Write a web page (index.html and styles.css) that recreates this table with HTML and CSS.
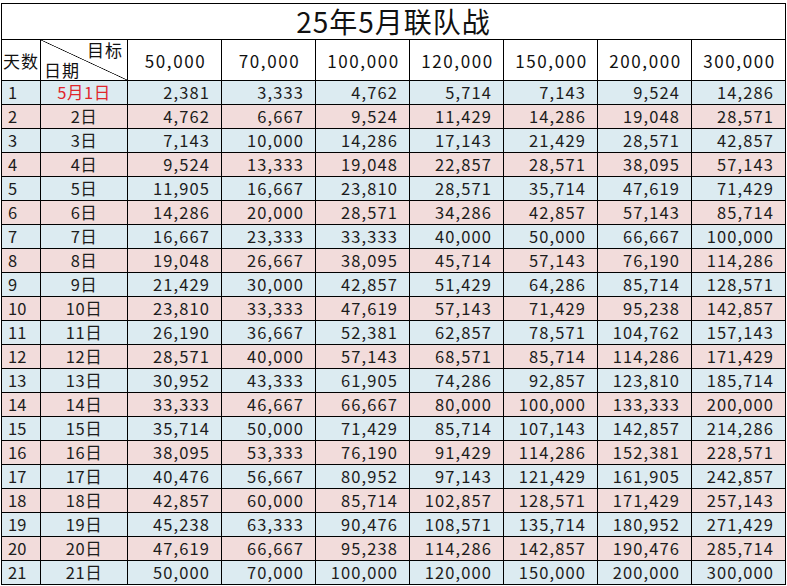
FILE: index.html
```html
<!DOCTYPE html>
<html lang="zh">
<head>
<meta charset="utf-8">
<link rel="stylesheet" href="styles.css">
</head>
<body>
<div class="sheet">
  <div class="title">25年5月联队战</div>
  <div class="hd days">天数</div>
  <div class="hd diag"><span class="tgt">目标</span><span class="dt">日期</span></div>
  <div class="hd num">50,000</div>
  <div class="hd num">70,000</div>
  <div class="hd num">100,000</div>
  <div class="hd num">120,000</div>
  <div class="hd num">150,000</div>
  <div class="hd num">200,000</div>
  <div class="hd num">300,000</div>

  <div class="row b"><div class="c0">1</div><div class="c1 red">5月1日</div><div>2,381</div><div>3,333</div><div>4,762</div><div>5,714</div><div>7,143</div><div>9,524</div><div>14,286</div></div>
  <div class="row p"><div class="c0">2</div><div class="c1">2日</div><div>4,762</div><div>6,667</div><div>9,524</div><div>11,429</div><div>14,286</div><div>19,048</div><div>28,571</div></div>
  <div class="row b"><div class="c0">3</div><div class="c1">3日</div><div>7,143</div><div>10,000</div><div>14,286</div><div>17,143</div><div>21,429</div><div>28,571</div><div>42,857</div></div>
  <div class="row p"><div class="c0">4</div><div class="c1">4日</div><div>9,524</div><div>13,333</div><div>19,048</div><div>22,857</div><div>28,571</div><div>38,095</div><div>57,143</div></div>
  <div class="row b"><div class="c0">5</div><div class="c1">5日</div><div>11,905</div><div>16,667</div><div>23,810</div><div>28,571</div><div>35,714</div><div>47,619</div><div>71,429</div></div>
  <div class="row p"><div class="c0">6</div><div class="c1">6日</div><div>14,286</div><div>20,000</div><div>28,571</div><div>34,286</div><div>42,857</div><div>57,143</div><div>85,714</div></div>
  <div class="row b"><div class="c0">7</div><div class="c1">7日</div><div>16,667</div><div>23,333</div><div>33,333</div><div>40,000</div><div>50,000</div><div>66,667</div><div>100,000</div></div>
  <div class="row p"><div class="c0">8</div><div class="c1">8日</div><div>19,048</div><div>26,667</div><div>38,095</div><div>45,714</div><div>57,143</div><div>76,190</div><div>114,286</div></div>
  <div class="row b"><div class="c0">9</div><div class="c1">9日</div><div>21,429</div><div>30,000</div><div>42,857</div><div>51,429</div><div>64,286</div><div>85,714</div><div>128,571</div></div>
  <div class="row p"><div class="c0">10</div><div class="c1">10日</div><div>23,810</div><div>33,333</div><div>47,619</div><div>57,143</div><div>71,429</div><div>95,238</div><div>142,857</div></div>
  <div class="row b"><div class="c0">11</div><div class="c1">11日</div><div>26,190</div><div>36,667</div><div>52,381</div><div>62,857</div><div>78,571</div><div>104,762</div><div>157,143</div></div>
  <div class="row p"><div class="c0">12</div><div class="c1">12日</div><div>28,571</div><div>40,000</div><div>57,143</div><div>68,571</div><div>85,714</div><div>114,286</div><div>171,429</div></div>
  <div class="row b"><div class="c0">13</div><div class="c1">13日</div><div>30,952</div><div>43,333</div><div>61,905</div><div>74,286</div><div>92,857</div><div>123,810</div><div>185,714</div></div>
  <div class="row p"><div class="c0">14</div><div class="c1">14日</div><div>33,333</div><div>46,667</div><div>66,667</div><div>80,000</div><div>100,000</div><div>133,333</div><div>200,000</div></div>
  <div class="row b"><div class="c0">15</div><div class="c1">15日</div><div>35,714</div><div>50,000</div><div>71,429</div><div>85,714</div><div>107,143</div><div>142,857</div><div>214,286</div></div>
  <div class="row p"><div class="c0">16</div><div class="c1">16日</div><div>38,095</div><div>53,333</div><div>76,190</div><div>91,429</div><div>114,286</div><div>152,381</div><div>228,571</div></div>
  <div class="row b"><div class="c0">17</div><div class="c1">17日</div><div>40,476</div><div>56,667</div><div>80,952</div><div>97,143</div><div>121,429</div><div>161,905</div><div>242,857</div></div>
  <div class="row p"><div class="c0">18</div><div class="c1">18日</div><div>42,857</div><div>60,000</div><div>85,714</div><div>102,857</div><div>128,571</div><div>171,429</div><div>257,143</div></div>
  <div class="row b"><div class="c0">19</div><div class="c1">19日</div><div>45,238</div><div>63,333</div><div>90,476</div><div>108,571</div><div>135,714</div><div>180,952</div><div>271,429</div></div>
  <div class="row p"><div class="c0">20</div><div class="c1">20日</div><div>47,619</div><div>66,667</div><div>95,238</div><div>114,286</div><div>142,857</div><div>190,476</div><div>285,714</div></div>
  <div class="row b"><div class="c0">21</div><div class="c1">21日</div><div>50,000</div><div>70,000</div><div>100,000</div><div>120,000</div><div>150,000</div><div>200,000</div><div>300,000</div></div>
</div>
</body>
</html>
```
FILE: styles.css
```css
html, body {
  margin: 0;
  padding: 0;
  background: #ffffff;
}
body {
  padding: 3px 0 0 1px;
  font-family: "Noto Sans CJK SC", "Noto Sans", sans-serif;
  color: #1c1c1c;
}
.sheet {
  display: grid;
  grid-template-columns: 38px 86px repeat(7, 93px);
  grid-template-rows: 35px 40px repeat(21, 23px);
  gap: 1px;
  padding: 1px;
  width: 785px;
  box-sizing: border-box;
  background: #000;
}
.sheet > div,
.row > div {
  background: #fff;
  white-space: nowrap;
}
.title {
  grid-column: 1 / -1;
  font-size: 28px;
  line-height: 35px;
  letter-spacing: 1px;
  text-align: center;
  color: #111;
}
.hd {
  font-size: 17px;
  display: flex;
  align-items: center;
  color: #111;
}
.days {
  padding-left: 1px;
  letter-spacing: 1px;
}
.num {
  justify-content: center;
  letter-spacing: 1.6px;
  padding-left: 2px;
}
.diag {
  position: relative;
  background: linear-gradient(to top right, #fff calc(50% - 0.7px), #000 50%, #fff calc(50% + 0.7px)) !important;
}
.diag .tgt {
  position: absolute;
  right: 4px;
  top: 0;
  line-height: 20px;
  letter-spacing: 1px;
}
.diag .dt {
  position: absolute;
  left: 3px;
  bottom: 0;
  line-height: 20px;
  letter-spacing: 1px;
}
.row {
  display: contents;
}
.row > div {
  font-size: 16.5px;
  line-height: 23px;
  text-align: right;
  padding-right: 11px;
  letter-spacing: 1.1px;
}
.row.b > div { background: #dcebf1; }
.row.p > div { background: #f2dcdb; }
.row > .c0 {
  text-align: left;
  padding: 0 0 0 6px;
  letter-spacing: 0;
}
.row > .c1 {
  text-align: center;
  padding: 0;
  letter-spacing: 0.5px;
}
.row > .red {
  color: #e0262c;
}
```
